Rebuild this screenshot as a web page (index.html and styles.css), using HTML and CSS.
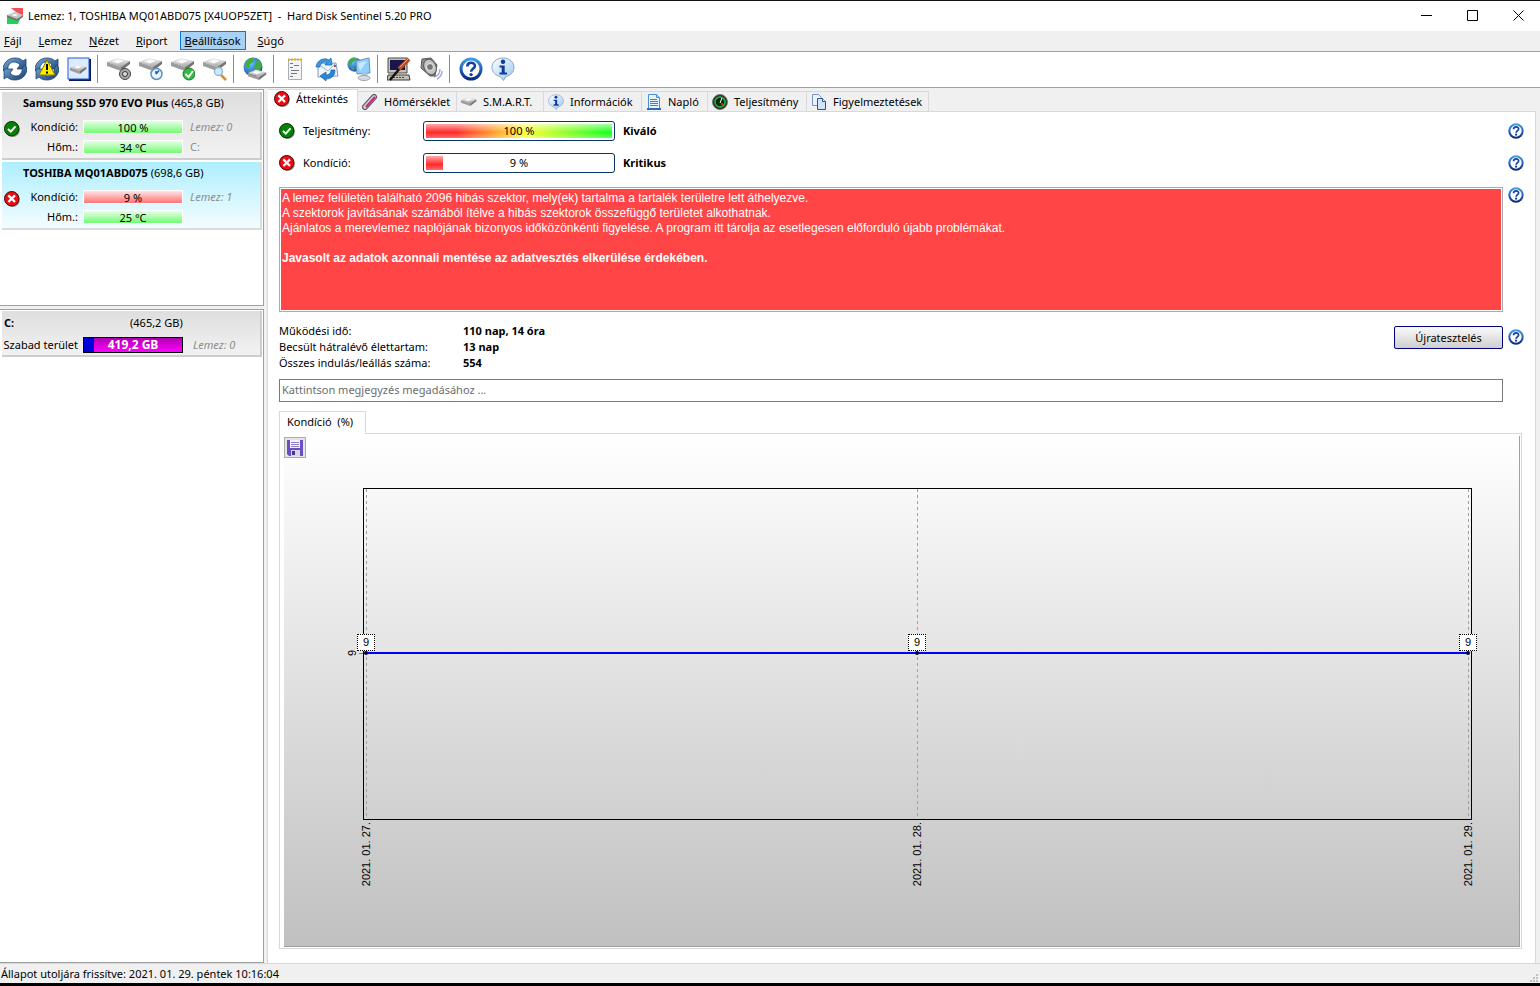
FILE: index.html
```html
<!doctype html>
<html lang="hu">
    <head>
        <meta charset="utf-8" />
        <title>Hard Disk Sentinel 5.20 PRO</title>
        <link rel="stylesheet" href="styles.css">
    </head>

    <body>
        <!-- shared icons -->
        <svg class="defs" width="0" height="0" aria-hidden="true">
            <defs>
                <linearGradient id="gBlue" x1="0" y1="0" x2="0" y2="1">
                    <stop offset="0" stop-color="#3f9be8" />
                    <stop offset="1" stop-color="#0a2a86" />
                </linearGradient>
                <linearGradient id="gArrow" x1="0" y1="0" x2="1" y2="1">
                    <stop offset="0" stop-color="#7aaedd" />
                    <stop offset="1" stop-color="#12386e" />
                </linearGradient>
                <linearGradient id="gDisk" x1="0" y1="0" x2="0" y2="1">
                    <stop offset="0" stop-color="#f0f0f0" />
                    <stop offset="1" stop-color="#a8a8a8" />
                </linearGradient>
                <linearGradient id="gBubble" x1="0" y1="0" x2="1" y2="1">
                    <stop offset="0" stop-color="#ffffff" />
                    <stop offset="1" stop-color="#9cc8ee" />
                </linearGradient>
                <radialGradient id="gGlobe" cx="0.35" cy="0.3" r="0.8">
                    <stop offset="0" stop-color="#6fc4ff" />
                    <stop offset="1" stop-color="#0a3fae" />
                </radialGradient>
            </defs>

            <symbol id="ok" viewBox="0 0 16 16">
                <circle cx="8.6" cy="8.8" r="7.2" fill="#8a8a8a" />
                <circle cx="7.7" cy="7.7" r="7.2" fill="#078207" stroke="#033003" />
                <path d="M4 8l2.8 2.6L11.5 5.4" fill="none" stroke="#fff" stroke-width="2" />
            </symbol>
            <symbol id="bad" viewBox="0 0 16 16">
                <circle cx="8.6" cy="8.8" r="7.2" fill="#8a8a8a" />
                <circle cx="7.7" cy="7.7" r="7.2" fill="#f00a14" stroke="#4a0505" />
                <path d="M4.4 4.4l6.6 6.6M11 4.4l-6.6 6.6" stroke="#fff" stroke-width="2.2" />
            </symbol>
            <symbol id="help" viewBox="0 0 24 24">
                <circle cx="12" cy="12" r="10" fill="#fff" stroke="url(#gBlue)" stroke-width="3" />
                <path d="M8.3 9.5c0-5 7.6-4.8 7.6-.6 0 2.8-3.8 3-3.8 5.8" fill="none" stroke="#1440a0" stroke-width="2.6" />
                <circle cx="12.1" cy="17.6" r="1.7" fill="#1440a0" />
            </symbol>
            <symbol id="info" viewBox="0 0 24 24">
                <path d="M12 1C5.5 1 1 5 1 10.5c0 5 4 8 8 9l3.5 4 2.500-4c4.500-1 8-4.500 8-9C23 5 18.500 1 12 1z" fill="url(#gBubble)" stroke="#8aa6c4" />
                <circle cx="12" cy="4.8" r="2.2" fill="#0d3c9c" />
                <path d="M8.5 8.5h5.2v7h2.3v2H8.5v-2h2.200v-5H8.500z" fill="#0d3c9c" />
            </symbol>
            <symbol id="drive" viewBox="0 0 24 24">
                <path d="M0 5L10 1l13 3-9 6z" fill="url(#gDisk)" />
                <path d="M0 5l14 5v4L0 9z" fill="#9c9c9c" />
                <path d="M14 10l9-6v3l-9 7z" fill="#747474" />
                <path d="M5 4.5l6-2 6 1.5-6 2.500z" fill="#fafafa" />
            </symbol>
            <symbol id="sync" viewBox="0 0 24 24">
                <path d="M0 13C0 6 5 1 12 1c4 0 6 1 8 3l3-2v10h-9l3-4c-2-2-3-3-6-3-4 0-6 3-6.500 8l-2 3z" fill="url(#gArrow)" stroke="#1c4476" stroke-width=".8" />
                <path d="M24 11c0 7-5 12-12 12-4 0-6-1-8-3l-3 2V12h9l-3 4c2 2 3 3 6 3 4 0 6-3 6.500-8l2-3z" fill="url(#gArrow)" stroke="#1c4476" stroke-width=".8" />
            </symbol>
            <symbol id="globe" viewBox="0 0 24 24">
                <circle cx="10" cy="10" r="9.5" fill="url(#gGlobe)" />
                <path d="M2 6c2-4 6-6 9-5l-1 4-3 2-1 4-3-1zM12 3l5 1 2 5-3 6-4-2-1-4 3-2zM5 13l4 1 1 4-3-1z" fill="#3fae3a" />
            </symbol>
        </svg>

        <header class="titlebar">
            <svg class="app-icon" viewBox="0 0 16 16">
                <path d="M0 0h16v16H0z" fill="#fff" />
                <path d="M4 0h12v8L9 4z" fill="#f4505a" />
                <path d="M0 8l8 3 6-2-3 7H0z" fill="#22d060" />
                <path d="M0 7l8-3 8 3-6 4z" fill="#c4c4c4" />
                <path d="M0 7l10 4 6-4v2l-6 4L0 9z" fill="#7b6b6b" />
                <path d="M4 7l4-1 3 1-3 1z" fill="#fff" />
            </svg>
            <span class="caption">Lemez: 1, TOSHIBA MQ01ABD075 [X4UOP5ZET]&nbsp; -&nbsp; Hard Disk Sentinel 5.20 PRO</span>
            <div class="window-buttons">
                <button aria-label="Kis méret"><svg viewBox="0 0 11 11"><path d="M0 5.5h11" /></svg></button>
                <button aria-label="Teljes méret"><svg viewBox="0 0 11 11"><path d="M.5.5h10v10H.5z" /></svg></button>
                <button aria-label="Bezárás"><svg viewBox="0 0 11 11"><path d="M.5.5l10 10M10.5.5l-10 10" /></svg></button>
            </div>
        </header>

        <nav class="menu">
            <button><u>F</u>ájl</button>
            <button><u>L</u>emez</button>
            <button><u>N</u>ézet</button>
            <button><u>R</u>iport</button>
            <button class="open"><u>B</u>eállítások</button>
            <button><u>S</u>úgó</button>
        </nav>

        <div class="toolbar">
            <button aria-label="Frissítés"><svg viewBox="0 0 24 24"><use href="#sync" /></svg></button>
            <button aria-label="Figyelmeztetés"><svg viewBox="0 0 24 24">
                <use href="#sync" />
                <path d="M12 3l8 15H4z" fill="#ffee00" stroke="#8a7c00" />
                <path d="M12 7v6M12 14.5v2" stroke="#000" stroke-width="2" />
            </svg></button>
            <button aria-label="Lemez"><svg viewBox="0 0 24 24">
                <rect x="2" y="2" width="22" height="22" fill="#0a1a60" />
                <rect x="1" y="1" width="21" height="21" fill="#dcebff" stroke="#1c5cd8" />
                <svg x="3" y="7" width="17" height="17" viewBox="0 0 24 24"><use href="#drive" /></svg>
            </svg></button>
            <i class="sep"></i>
            <button aria-label="Lemez hang"><svg viewBox="0 0 24 24">
                <use href="#drive" />
                <circle cx="18" cy="17" r="5.5" fill="#a9a9a9" stroke="#444" />
                <circle cx="18" cy="17" r="2.5" fill="#ddd" stroke="#333" />
            </svg></button>
            <button aria-label="Lemez időzítés"><svg viewBox="0 0 24 24">
                <use href="#drive" />
                <circle cx="17.5" cy="17" r="5.5" fill="#e8f4ff" stroke="#5f8fb8" stroke-width="1.5" />
                <path d="M17 17l3-3.5M17 17v-3" stroke="#1560b0" stroke-width="1.5" />
            </svg></button>
            <button aria-label="Lemez teszt"><svg viewBox="0 0 24 24">
                <use href="#drive" />
                <circle cx="18" cy="17" r="6" fill="#35b845" stroke="#167a26" />
                <path d="M14.5 17l3 3 4.500-6" fill="none" stroke="#fff" stroke-width="2" />
            </svg></button>
            <button aria-label="Lemez keresés"><svg viewBox="0 0 24 24">
                <use href="#drive" />
                <path d="M18 18l5 5" stroke="#e08a2a" stroke-width="2.5" />
                <circle cx="15.5" cy="14.5" r="4" fill="#cfeaff" stroke="#8ab4d4" stroke-width="1.3" />
            </svg></button>
            <i class="sep"></i>
            <button aria-label="Hálózati lemez"><svg viewBox="0 0 24 24">
                <use href="#globe" />
                <svg x="5" y="12" width="19" height="19" viewBox="0 0 24 24"><use href="#drive" /></svg>
            </svg></button>
            <i class="sep"></i>
            <button aria-label="Jelentés"><svg viewBox="0 0 24 24">
                <path d="M5.5 2.5h13v20h-13z" fill="#f1f3f4" stroke="#a9aeb2" />
                <path d="M5 2.5h14" stroke="#d0b020" stroke-width="2" stroke-dasharray="2 1" />
                <path d="M7 6.5h3M7 10.5h3M11 8.5h5M8 13.5h8M8 16.5h6M7 19.5h3" stroke="#71777c" />
            </svg></button>
            <button aria-label="Levél küldése"><svg viewBox="0 0 24 24">
                <path d="M3 7l18-1 2 13-20 1z" fill="#eef5fc" stroke="#7c9cba" />
                <path d="M3 7l10 7 8-8" fill="none" stroke="#9ab2ca" />
                <path d="M1 10C2 3 9 0 14 3l2-2 1 7-7 0 2-2C8 4 5 6 5 10z" fill="#3a98e0" stroke="#1663ac" stroke-width=".7" />
                <path d="M20 13c0 6-4 9-9 9l0 2-6-5 6-4v3c3 0 5-2 5-5z" fill="#2c84d6" stroke="#1663ac" stroke-width=".7" />
                <path d="M19 8h2v2h-2z" fill="#e04030" />
            </svg></button>
            <button aria-label="Hálózat"><svg viewBox="0 0 24 24">
                <svg x="0" y="0" width="18" height="18" viewBox="0 0 24 24"><use href="#globe" /></svg>
                <path d="M9 4l13-3 1 15-13 1z" fill="#8fd0fb" stroke="#6f8fb0" />
                <path d="M11 6l9-2-7 10z" fill="#c5e9ff" />
                <path d="M15 16h5l1 4-7 0z" fill="#b5c0cc" />
                <ellipse cx="17" cy="21" rx="6" ry="2.5" fill="#d4dbe2" stroke="#98a4b0" />
            </svg></button>
            <i class="sep"></i>
            <button aria-label="Beállítások"><svg viewBox="0 0 24 24">
                <path d="M1 1h19v15H1z" fill="#c7c3b8" stroke="#4b4b4b" />
                <path d="M3 3h15v10H3z" fill="#17174c" />
                <path d="M1 18h21l1 5H0z" fill="#c7c3b8" stroke="#3a3a3a" />
                <path d="M3 20.5h15" stroke="#444" stroke-dasharray="2 1" />
                <path d="M3 23L14 10" stroke="#111" stroke-width="2.5" />
                <path d="M12 12L22 2" stroke="#c8481e" stroke-width="4" />
                <path d="M13 10l8-8" stroke="#f7a070" />
            </svg></button>
            <button aria-label="Hang"><svg viewBox="0 0 24 24">
                <path d="M15 20c4-1 6-4 6-8M18 22c4-2 5-5 5-8" fill="none" stroke="#a8acd8" stroke-width="1.5" />
                <path d="M3 2l9-1 6 7-2 11-5 0L2 11z" fill="#8b8b8b" stroke="#5a5a5a" />
                <ellipse cx="11" cy="10" rx="6" ry="8" fill="#c4c4c4" stroke="#5d5d5d" transform="rotate(-25 11 10)" />
                <circle cx="11" cy="10" r="3.5" fill="#777" stroke="#eee" />
            </svg></button>
            <i class="sep"></i>
            <button aria-label="Súgó"><svg viewBox="0 0 24 24"><use href="#help" /></svg></button>
            <button aria-label="Információ"><svg viewBox="0 0 24 24"><use href="#info" /></svg></button>
        </div>

        <div class="workspace">
            <aside class="side">
                <section class="panel disks">
                    <article class="card">
                        <svg class="state" viewBox="0 0 16 16"><use href="#ok" /></svg>
                        <h2><b>Samsung SSD 970 EVO Plus</b> (465,8 GB)</h2>
                        <div class="row">
                            <span class="label">Kondíció:</span>
                            <span class="bar green">100 %</span>
                            <em>Lemez: 0</em>
                        </div>
                        <div class="row">
                            <span class="label">Hőm.:</span>
                            <span class="bar green">34 °C</span>
                            <span class="letter">C:</span>
                        </div>
                    </article>
                    <article class="card selected">
                        <svg class="state" viewBox="0 0 16 16"><use href="#bad" /></svg>
                        <h2><b>TOSHIBA MQ01ABD075</b> (698,6 GB)</h2>
                        <div class="row">
                            <span class="label">Kondíció:</span>
                            <span class="bar red">9 %</span>
                            <em>Lemez: 1</em>
                        </div>
                        <div class="row">
                            <span class="label">Hőm.:</span>
                            <span class="bar green">25 °C</span>
                        </div>
                    </article>
                </section>

                <section class="panel volumes">
                    <article class="card volume">
                        <div class="row volume-head">
                            <b>C:</b>
                            <span>(465,2 GB)</span>
                        </div>
                        <div class="row">
                            <span class="label">Szabad terület</span>
                            <span class="bar space">419,2 GB</span>
                            <em>Lemez: 0</em>
                        </div>
                    </article>
                </section>
            </aside>

            <main class="main">
                <div class="tabs" role="tablist">
                    <button class="tab active" role="tab"><svg viewBox="0 0 16 16"><use href="#bad" /></svg>Áttekintés</button>
                    <button class="tab" role="tab"><svg viewBox="0 0 16 16">
                        <path d="M3 13L12 3" stroke="#55565c" stroke-width="6" stroke-linecap="round" />
                        <path d="M3 13L12 3" stroke="#c9ccd4" stroke-width="4" stroke-linecap="round" />
                        <path d="M4 13L13 3" stroke="#d0247c" stroke-width="2" />
                    </svg>Hőmérséklet</button>
                    <button class="tab" role="tab"><svg viewBox="0 -4 24 24"><use href="#drive" /></svg>S.M.A.R.T.</button>
                    <button class="tab" role="tab"><svg viewBox="0 0 24 24"><use href="#info" /></svg>Információk</button>
                    <button class="tab" role="tab"><svg viewBox="0 0 16 16">
                        <path d="M2.5.5h8l3 3v11h-11z" fill="#e4f2ff" stroke="#4a90d9" />
                        <path d="M10.5.5v3h3" fill="#9cc8f4" stroke="#4a90d9" />
                        <path d="M4 5.5h7M4 7.5h8M4 9.5h8M4 11.5h8" stroke="#3f7fc8" />
                        <path d="M1 15h14" stroke="#2a6cb8" stroke-width="2" />
                    </svg>Napló</button>
                    <button class="tab" role="tab"><svg viewBox="0 0 16 16">
                        <circle cx="8" cy="8" r="7.5" fill="#2a2a2a" stroke="#777" />
                        <circle cx="8" cy="8" r="5" fill="#0c260c" stroke="#1fbf3a" stroke-width="1.5" />
                        <path d="M8 9l2-5" stroke="#fff" />
                        <path d="M9 9h2v2H9z" fill="#e02020" />
                    </svg>Teljesítmény</button>
                    <button class="tab" role="tab"><svg viewBox="0 0 16 16">
                        <path d="M1.5.5h6l3 3v8h-9z" fill="#e9f3ff" stroke="#7a93c8" />
                        <path d="M6.5 4.5h5l3 3v8h-8z" fill="#cfe3fb" stroke="#33508f" />
                        <path d="M11.5 4.5v3h3" fill="#fff" stroke="#33508f" />
                    </svg>Figyelmeztetések</button>
                </div>

                <div class="page">
                    <div class="line meter-line">
                        <div class="meter">
                            <svg viewBox="0 0 16 16"><use href="#ok" /></svg>
                            <span>Teljesítmény:</span>
                            <div class="gauge"><div class="fill" style="width: 100%"></div><span>100 %</span></div>
                            <b>Kiváló</b>
                        </div>
                        <button class="help" aria-label="Súgó"><svg viewBox="0 0 24 24"><use href="#help" /></svg></button>
                    </div>
                    <div class="line meter-line">
                        <div class="meter">
                            <svg viewBox="0 0 16 16"><use href="#bad" /></svg>
                            <span>Kondíció:</span>
                            <div class="gauge"><div class="fill" style="width: 9%"></div><span>9 %</span></div>
                            <b>Kritikus</b>
                        </div>
                        <button class="help" aria-label="Súgó"><svg viewBox="0 0 24 24"><use href="#help" /></svg></button>
                    </div>

                    <div class="line">
                        <div class="alert">
                            <p>A lemez felületén található 2096 hibás szektor, mely(ek) tartalma a tartalék területre lett áthelyezve.</p>
                            <p>A szektorok javításának számából ítélve a hibás szektorok összefüggő területet alkothatnak.</p>
                            <p>Ajánlatos a merevlemez naplójának bizonyos időközönkénti figyelése. A program itt tárolja az esetlegesen előforduló újabb problémákat.</p>
                            <p class="strong">Javasolt az adatok azonnali mentése az adatvesztés elkerülése érdekében.</p>
                        </div>
                        <button class="help" aria-label="Súgó"><svg viewBox="0 0 24 24"><use href="#help" /></svg></button>
                    </div>

                    <div class="line stats-line">
                        <div class="stats">
                            <dl>
                                <dt>Működési idő:</dt>
                                <dd>110 nap, 14 óra</dd>
                                <dt>Becsült hátralévő élettartam:</dt>
                                <dd>13 nap</dd>
                                <dt>Összes indulás/leállás száma:</dt>
                                <dd>554</dd>
                            </dl>
                            <button class="retest">Újratesztelés</button>
                        </div>
                        <button class="help" aria-label="Súgó"><svg viewBox="0 0 24 24"><use href="#help" /></svg></button>
                    </div>

                    <div class="line">
                        <input class="note" type="text" aria-label="Megjegyzés" placeholder="Kattintson megjegyzés megadásához ..." />
                    </div>

                    <div class="chart-box">
                        <button class="chart-tab">Kondíció&nbsp; (%)</button>
                        <div class="chart-frame">
                            <div class="chart">
                                <button class="save" aria-label="Mentés"><svg viewBox="0 0 16 16">
                                    <path d="M0 0h16v16H2l-2-2z" fill="#6a4fc4" />
                                    <path d="M3 0h10v8H3z" fill="#f4f2ff" />
                                    <path d="M4 2.5h8M4 4.5h8M4 6.5h8" stroke="#8f84c8" />
                                    <path d="M4 10h9v6H4z" fill="#d8d8e4" />
                                    <path d="M5 11h3v4H5z" fill="#4a35a0" />
                                </svg></button>
                                <div class="plot">
                                    <span class="y-label">9</span>
                                    <div class="points">
                                        <div class="point"><span class="value">9</span><span class="date">2021. 01. 27.</span></div>
                                        <div class="point"><span class="value">9</span><span class="date">2021. 01. 28.</span></div>
                                        <div class="point"><span class="value">9</span><span class="date">2021. 01. 29.</span></div>
                                    </div>
                                </div>
                            </div>
                        </div>
                    </div>
                </div>
            </main>
        </div>

        <footer class="status">
            <span>Állapot utoljára frissítve: 2021. 01. 29. péntek 10:16:04</span>
            <svg class="grip" viewBox="0 0 9 9">
                <path d="M6 0h2v2H6zM3 3h2v2H3zM6 3h2v2H6zM0 6h2v2H0zM3 6h2v2H3zM6 6h2v2H6z" fill="#bfbfbf" />
            </svg>
        </footer>
    </body>
</html>
```
FILE: styles.css
```css
* {
    box-sizing: border-box;
}
body {
    display: flex;
    flex-direction: column;
    min-height: 100vh;
    margin: 0;
    border-top: 1px solid #111;
    border-bottom: 3px solid #000;
    background-color: #f0f0f0;
    font-family: "Noto Sans", "Open Sans", sans-serif;
    font-size: 11px;
    line-height: 16px;
    color: #000;
}
button {
    padding: 0;
    border: 0;
    background: none;
    font: inherit;
    color: inherit;
}
.defs {
    position: absolute;
}

/* title bar */
.titlebar {
    display: flex;
    align-items: center;
    height: 30px;
    padding-left: 7px;
    background-color: white;
}
.app-icon {
    width: 16px;
    height: 16px;
    margin-right: 5px;
}
.caption {
    flex: 1;
    white-space: nowrap;
}
.window-buttons {
    display: flex;
}
.window-buttons button {
    width: 46px;
    height: 30px;
    padding: 0 0 2px 2px;
}
.window-buttons svg {
    display: block;
    width: 11px;
    height: 11px;
    margin: 0 auto;
    fill: none;
    stroke: #000;
}

/* menu and toolbar */
.menu {
    display: flex;
    gap: 7px;
    height: 21px;
    margin-left: -1px;
    padding-bottom: 1px;
    border-bottom: 1px solid #a0a0a0;
}
.menu button {
    height: 19px;
    padding: 0 4px;
    border: 1px solid transparent;
    line-height: 16px;
}
.menu .open {
    border-color: #0a78d7;
    background-color: #a9d1f3;
}
.toolbar {
    display: flex;
    align-items: center;
    height: 36px;
    margin: 0 0 1px -1px;
    padding-bottom: 2px;
    border-bottom: 1px solid #a0a0a0;
    background-color: white;
}
.toolbar button {
    width: 32px;
    height: 32px;
}
.toolbar button > svg {
    display: block;
    width: 24px;
    height: 24px;
    margin: 0 auto;
}
.sep {
    width: 6px;
    height: 28px;
    margin-left: 2px;
    border-left: 1px solid #8c8c8c;
}

/* left side */
.workspace {
    display: flex;
    flex: 1;
    gap: 3px;
}
.side {
    display: flex;
    flex-direction: column;
    gap: 3px;
    width: 264px;
}
.panel {
    padding: 2px 1px 0 2px;
    border: 1px solid #a0a0a0;
    border-left: 0;
    background-color: white;
}
.disks {
    height: 217px;
}
.volumes {
    flex: 1;
    padding-top: 1px;
}
.card {
    position: relative;
    height: 68px;
    margin-bottom: 2px;
    padding-top: 1px;
    border-right: 2px solid #cdcdcd;
    border-bottom: 2px solid #cdcdcd;
    background: linear-gradient(#dedede, #f2f2f2);
}
.card.selected {
    background: linear-gradient(#aeeeff, #f4fdff);
    border-color: #d8dcdc;
}
.card h2 {
    margin: 0 0 4px 21px;
    font-size: 11px;
    font-weight: normal;
    line-height: 20px;
    white-space: nowrap;
}
.state {
    position: absolute;
    left: 2px;
    top: 29px;
    width: 16px;
    height: 16px;
}
.row {
    display: grid;
    grid-template-columns: 76px 100px 1fr;
    column-gap: 5px;
    align-items: center;
    height: 20px;
    white-space: nowrap;
}
.label {
    text-align: right;
}
.row em,
.letter {
    padding-left: 2px;
    color: #8c8c8c;
}
.bar {
    height: 14px;
    border: 1px solid white;
    line-height: 14px;
    text-align: center;
}
.green {
    background: linear-gradient(#e6ffe6, #74fb74);
}
.red {
    background: linear-gradient(#ffe4e4, #ff7474);
}
.card.volume {
    height: 46px;
}
.volume .row {
    height: 22px;
}
.volume .volume-head {
    grid-template-columns: 121px 1fr;
    padding-left: 2px;
}
.volume em {
    padding-left: 5px;
}
.space {
    height: 16px;
    border-color: #000;
    background: linear-gradient(to right, #0000d8 10%, transparent 10%), linear-gradient(#b000b0, #ff00ff);
    color: white;
    font-size: 12px;
    font-weight: bold;
}

/* tabs */
.main {
    display: flex;
    flex: 1;
    flex-direction: column;
    padding-right: 4px;
}
.tabs {
    display: grid;
    grid-template-columns: 90px 99px 87px 98px 66px 99px 122px;
    align-items: end;
    height: 22px;
    padding-left: 1px;
}
.tab {
    display: flex;
    align-items: center;
    gap: 6px;
    height: 20px;
    padding-left: 4px;
    border: 1px solid #d9d9d9;
    border-width: 1px 1px 0 0;
    white-space: nowrap;
}
.tab svg {
    flex: none;
    width: 16px;
    height: 16px;
}
.tab.active {
    height: 23px;
    margin-bottom: -1px;
    padding: 0 0 4px 6px;
    background-color: white;
    z-index: 1;
}
.page {
    display: flex;
    flex: 1;
    flex-direction: column;
    padding: 3px 11px 14px 11px;
    border: 1px solid #d9d9d9;
    border-bottom: 0;
    background-color: white;
}

/* overview */
.line {
    display: grid;
    grid-template-columns: 1fr 16px;
    column-gap: 5px;
}
.meter-line {
    align-items: center;
    height: 32px;
}
.help,
.help svg {
    display: block;
    width: 16px;
    height: 16px;
}
.meter {
    display: grid;
    grid-template-columns: 16px 112px 192px 1fr;
    column-gap: 8px;
    align-items: center;
}
.meter svg {
    width: 16px;
    height: 16px;
}
.gauge {
    position: relative;
    height: 20px;
    padding: 2px;
    border: 1px solid #0b3566;
    border-radius: 3px;
}
.gauge .fill {
    height: 14px;
    background: linear-gradient(rgba(255, 255, 255, 0.6), transparent 60%, rgba(255, 255, 255, 0.3)), linear-gradient(to right, #ff2a2a 30px, #ffff30 100px, #20ff20 180px);
}
.gauge span {
    position: absolute;
    inset: 0;
    line-height: 18px;
    text-align: center;
}
.alert {
    height: 125px;
    margin-top: 8px;
    padding: 3px 2px;
    border: 1px solid #a9adb2;
    outline: 1px solid white;
    outline-offset: -2px;
    background-color: #ff4545;
    color: white;
    font: 12px/15px "Liberation Sans", Arial, sans-serif;
}
.alert + .help {
    margin-top: 8px;
}
.alert p {
    margin: 0;
}
.alert .strong {
    margin-top: 15px;
    font-weight: bold;
}
.stats-line {
    margin-top: 11px;
}
.stats-line .help {
    margin-top: 6px;
}
.stats {
    display: flex;
    justify-content: space-between;
    align-items: flex-start;
}
.stats dl {
    display: grid;
    grid-template-columns: 184px 1fr;
    margin: 0;
}
.stats dd {
    margin: 0;
    font-weight: bold;
}
.retest {
    width: 109px;
    height: 23px;
    margin-top: 3px;
    border: 1px solid #000080;
    border-radius: 2px;
    background: linear-gradient(#fafafa, #cfcfcf);
}
.note {
    width: 100%;
    height: 23px;
    margin-top: 8px;
    padding: 0 2px 2px;
    border: 1px solid #7a7a7a;
    font: inherit;
}
.note::placeholder {
    color: #6d6d6d;
}

/* chart */
.chart-box {
    display: flex;
    flex: 1;
    flex-direction: column;
    align-items: flex-start;
    margin: 9px 2px 0 0;
}
.chart-tab {
    position: relative;
    z-index: 1;
    width: 87px;
    height: 23px;
    margin-bottom: -1px;
    padding: 0 0 2px 7px;
    border: 1px solid #d9d9d9;
    border-bottom: 0;
    background-color: white;
    text-align: left;
}
.chart-frame {
    display: flex;
    flex: 1;
    align-self: stretch;
    padding: 2px 1px 1px 4px;
    border: 1px solid #d9d9d9;
}
.chart {
    position: relative;
    display: flex;
    flex: 1;
    padding: 52px 47px 126px 79px;
    border: 1px solid #a0a0a0;
    border-width: 0 1px 1px 0;
    background: linear-gradient(#ffffff, #c0c0c0);
    font: 11px/14px "Liberation Sans", Arial, sans-serif;
}
.save {
    position: absolute;
    left: 0;
    top: 1px;
    width: 22px;
    height: 21px;
    border: 1px solid #acacac;
    background-color: #e4e4e4;
}
.save svg {
    display: block;
    width: 16px;
    height: 16px;
    margin: 0 auto;
}
.plot {
    position: relative;
    display: flex;
    flex: 1;
    padding: 0 2px;
    border: 1px solid #000;
}
.plot::before {
    content: "";
    position: absolute;
    left: 2px;
    right: 2px;
    top: calc(50% - 2px);
    height: 2px;
    background-color: blue;
}
.plot::after {
    content: "";
    position: absolute;
    left: -5px;
    top: calc(50% - 1px);
    width: 4px;
    height: 1px;
    background-color: #808080;
}
.y-label {
    position: absolute;
    left: -19px;
    top: calc(50% - 1px);
    translate: 0 -50%;
    writing-mode: vertical-rl;
    rotate: 180deg;
}
.points {
    display: flex;
    flex: 1;
    justify-content: space-between;
}
.point {
    position: relative;
    width: 1px;
    background: repeating-linear-gradient(#a0a0a0 0 3px, transparent 3px 6px);
}
.point::after {
    content: "";
    position: absolute;
    left: -2px;
    top: calc(50% - 3px);
    width: 4px;
    height: 4px;
    border-radius: 2px;
    background-color: #00003c;
}
.value {
    position: absolute;
    left: -9px;
    top: calc(50% - 20px);
    width: 18px;
    height: 17px;
    border: 1px dotted #000;
    background-color: white;
    line-height: 15px;
    text-align: center;
}
.date {
    position: absolute;
    left: -7px;
    top: calc(100% + 3px);
    writing-mode: vertical-rl;
    rotate: 180deg;
    white-space: nowrap;
}

/* status bar */
.status {
    display: flex;
    justify-content: space-between;
    align-items: center;
    height: 20px;
    padding: 1px 1px 0;
    border-top: 1px solid #d7d7d7;
}
.grip {
    align-self: flex-end;
    width: 9px;
    height: 9px;
}
```
